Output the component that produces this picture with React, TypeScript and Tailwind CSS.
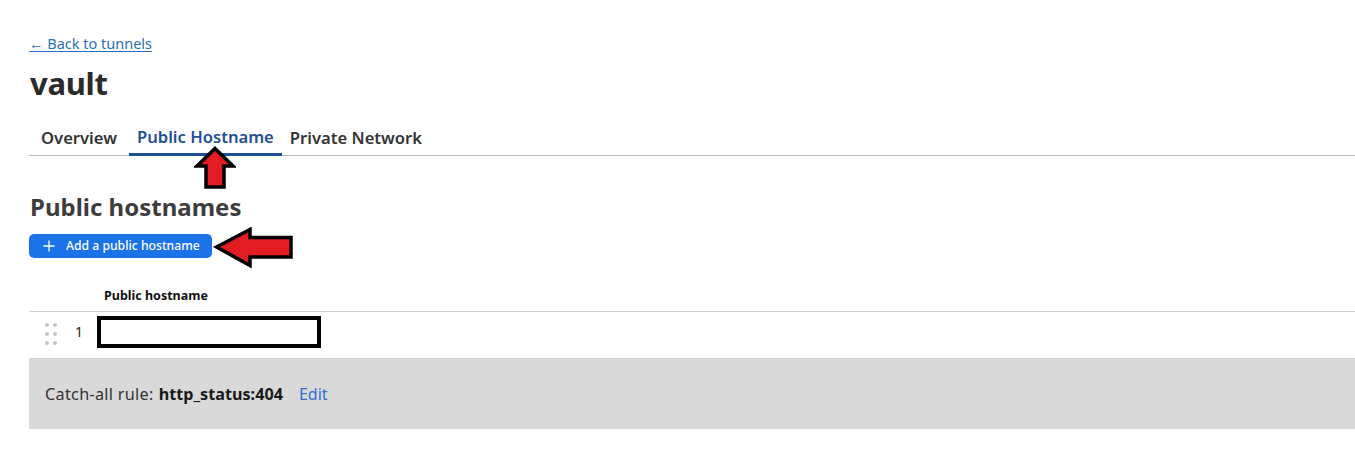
import React from "react";

function UpArrow() {
  return (
    <svg width="42" height="44" viewBox="0 0 42 44" className="absolute left-[194px] top-[146px]">
      <polygon points="21,2.5 39,20 30,20 30,41 12,41 12,20 3,20" fill="#e31b23" stroke="#000" strokeWidth="3.5" strokeLinejoin="miter" />
    </svg>
  );
}

function LeftArrow() {
  return (
    <svg width="82" height="42" viewBox="0 0 82 42" className="absolute left-[213px] top-[227px]">
      <polygon points="3.5,20 37,2.5 37,10.5 78,10.5 78,30 37,30 37,38.5" fill="#e31b23" stroke="#000" strokeWidth="3.5" strokeLinejoin="miter" />
    </svg>
  );
}

function DragHandle() {
  return (
    <div className="grid grid-cols-2 gap-x-[4px] gap-y-[5px]">
      {Array.from({ length: 6 }).map((_, i) => (
        <span key={i} className="block w-[4px] h-[4px] rounded-full bg-[#c4c4c4]" />
      ))}
    </div>
  );
}

export default function App() {
  return (
    <div className="relative w-[1355px] h-[449px] overflow-hidden bg-white text-[#333] font-['Noto_Sans','Open_Sans',sans-serif]">
      <div className="pl-[29px] pt-[31px]">
        <a href="#" className="inline-block text-[14.5px] leading-[20px] text-[#2d6eb8] underline underline-offset-2">
          ← Back to tunnels
        </a>
        <h1 className="ml-[1px] mt-[8px] text-[31px] leading-[40px] font-bold text-[#2b2b2b] tracking-[-0.3px]">vault</h1>

        <div className="mt-[22px] flex items-end border-b border-[#b5b5b5]">
          <button className="ml-[4px] mr-[4px] px-[8px] pb-[6px] text-[16.6px] leading-[23px] font-semibold text-[#333]">
            Overview
          </button>
          <button className="px-[8px] pb-[5px] mb-[-1px] border-b-[3px] border-[#1f4f95] text-[16.6px] leading-[23px] font-semibold text-[#1f4f95]">
            Public Hostname
          </button>
          <button className="px-[8px] pb-[6px] text-[16.6px] leading-[23px] font-semibold text-[#333]">
            Private Network
          </button>
        </div>

        <h2 className="ml-[1px] mt-[35px] text-[24px] leading-[32px] font-bold text-[#3d3d3d]">Public hostnames</h2>

        <button className="mt-[11px] flex items-center h-[24px] w-[183px] rounded-[5px] bg-[#1a73e8] pl-[14px] text-white">
          <svg width="12" height="12" viewBox="0 0 12 12" className="mr-[11px]">
            <path d="M6 0.5V11.5M0.5 6H11.5" stroke="#fff" strokeWidth="1.3" />
          </svg>
          <span className="text-[12.2px] leading-[16px] font-medium">Add a public hostname</span>
        </button>

        <div className="mt-[22px]">
          <div className="flex h-[32px] items-center border-b border-[#d0d0d0] pl-[75px] pt-[2px]">
            <span className="text-[12.5px] font-bold text-[#111]">Public hostname</span>
          </div>
          <div className="flex h-[47px] items-start pt-[4px] border-b border-[#d0d0d0]">
            <div className="ml-[16px] mt-[7px]">
              <DragHandle />
            </div>
            <span className="ml-[18px] mt-[6px] text-[14px] leading-[20px] text-[#222]">1</span>
            <div className="ml-[14px] h-[32px] w-[224px] border-[4px] border-black bg-white" />
          </div>
          <div className="flex h-[70px] items-center bg-[#d9d9d9] pl-[16px]">
            <span className="text-[16.2px] tracking-[0.3px] text-[#333]">Catch-all rule:</span>
            <span className="ml-[5px] text-[16.2px] font-bold text-[#1a1a1a]">http_status:404</span>
            <a href="#" className="ml-[16px] text-[16px] text-[#2f6fd6]">Edit</a>
          </div>
        </div>
      </div>
      <UpArrow />
      <LeftArrow />
    </div>
  );
}
